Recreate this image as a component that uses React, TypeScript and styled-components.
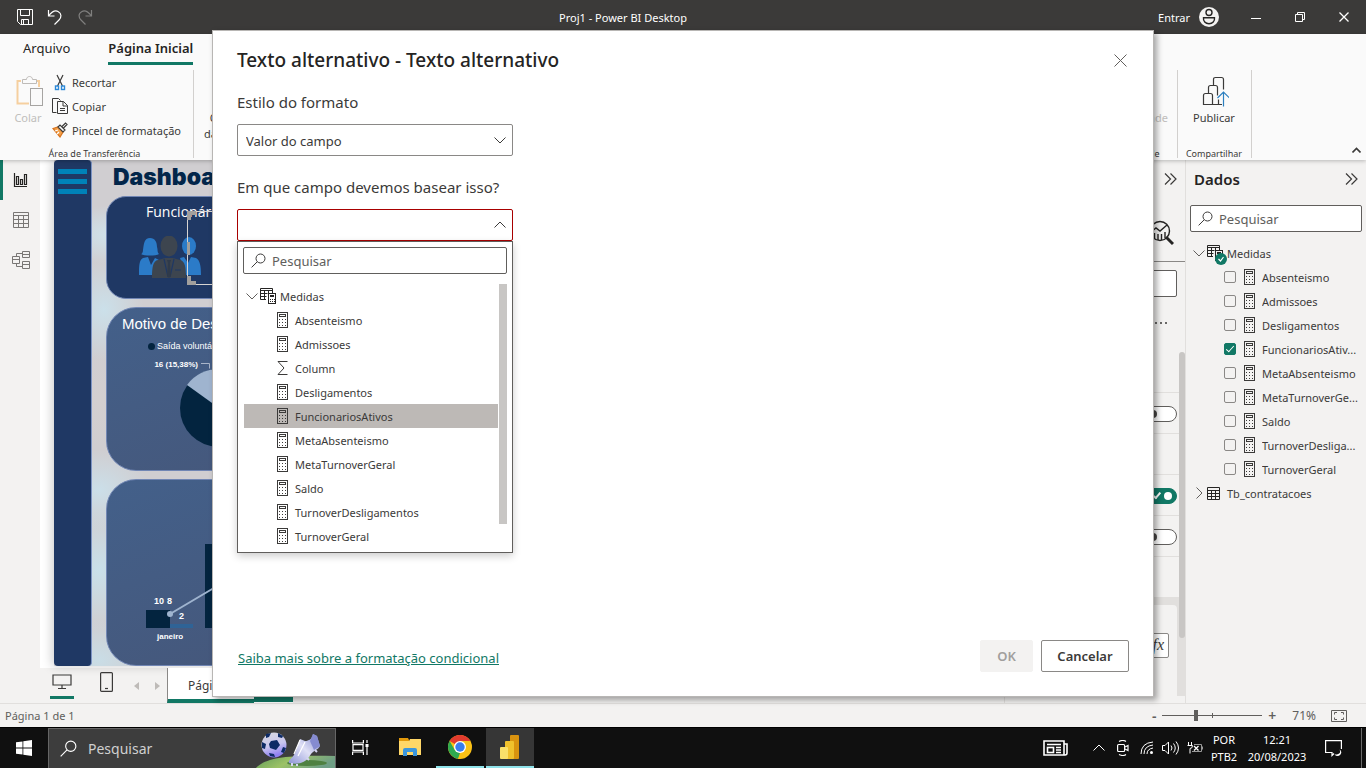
import React from "react";
import styled, { createGlobalStyle, css } from "styled-components";

const color = {
  ink: "#252423",
  text: "#3b3a39",
  muted: "#605e5c",
  disabled: "#a19f9d",
  line: "#e1dfdd",
  pane: "#f3f2f1",
  ribbon: "#fafafa",
  border: "#8a8886",
  green: "#117865",
  navy: "#1f3864",
  deep: "#03243f",
};

const Global = createGlobalStyle`
  *, *::before, *::after { box-sizing: border-box; }
  body { margin: 0; }
  body, button, input, select {
    font-family: "Noto Sans", "Open Sans", sans-serif;
    font-size: 11px;
    color: ${color.text};
  }
  button { padding: 0; border: 0; background: none; cursor: pointer; }
  ul { list-style: none; margin: 0; padding: 0; }
  svg { display: block; flex: none; }
`;

/* ---------- shared parts ---------- */

const Desktop = styled.div`
  position: relative;
  display: flex;
  flex-direction: column;
  min-height: 100vh;
  overflow: hidden;
  background: ${color.pane};
`;

const Stroke = styled.svg.attrs({ fill: "none", stroke: "currentColor" })``;

const IconButton = styled.button`
  display: flex;
  align-items: center;
  justify-content: center;
  color: inherit;
`;

const SearchField = styled.label`
  display: flex;
  align-items: center;
  gap: 6px;
  height: 27px;
  padding: 0 7px;
  border: 1px solid ${color.muted};
  border-radius: 2px;
  background: #fff;
  color: ${color.text};
`;

const SearchInput = styled.input`
  flex: 1;
  min-width: 0;
  padding: 0;
  border: 0;
  outline: 0;
  background: none;
  font-size: 13px;
  &::placeholder { color: ${color.muted}; opacity: 1; }
`;

const Magnifier = ({ size = 15 }: { size?: number }) => (
  <Stroke width={size} height={size} viewBox="0 0 15 15">
    <circle cx="9.5" cy="5.5" r="4.5" />
    <path d="M6.2 8.8 0.6 14.4" />
  </Stroke>
);

const CalcIcon = () => (
  <Stroke width="11" height="16" viewBox="0 0 11 16">
    <rect x="0.5" y="0.5" width="10" height="15" />
    <rect x="2.5" y="2.5" width="6" height="2" />
    <path d="M2 7.5h8M2 10.5h8M2 13.5h8" strokeDasharray="1 2" />
  </Stroke>
);

const SigmaIcon = () => (
  <Stroke width="11" height="16" viewBox="0 0 11 16">
    <path d="M10.5 1.5H1l6 6.5-6 6.5h9.500" />
  </Stroke>
);

const MeasureTableIcon = () => (
  <Stroke width="16" height="16" viewBox="0 0 16 16">
    <path d="M6 11.500H.5V.5h12V5M.5 2.500h12M.5 5.500h7M.5 8.500h6M4.500 2.500v9M8.500 2.500V5" />
    <rect x="8.500" y="5.500" width="7" height="10" />
    <rect x="10.500" y="7.500" width="3" height="1" />
    <path d="M10 11.500h5M10 13.500h5" strokeDasharray="1 1" />
  </Stroke>
);

const TableIcon = () => (
  <Stroke width="13" height="13" viewBox="0 0 13 13">
    <path d="M.5 .5h12v12H.5zM.5 3.500h12M.5 6.500h12M.5 9.500h12M4.500 3.500v9M8.500 3.500v9" />
  </Stroke>
);

const Chevron = ({ turn = 0, width = 12 }: { turn?: number; width?: number }) => (
  <Stroke width={width} height={width} viewBox="0 0 12 12">
    <path d="M.5 3.500 6 9l5.500-5.500" transform={`rotate(${turn} 6 6)`} />
  </Stroke>
);

const DoubleChevron = () => (
  <Stroke width="13" height="12" viewBox="0 0 13 12" strokeWidth="1.2">
    <path d="M1 .5 6.500 6 1 11.500M6.500 .5 12 6 6.500 11.500" />
  </Stroke>
);

/* ---------- title bar ---------- */

const TitleBar = styled.header`
  display: grid;
  grid-template-columns: 1fr auto 1fr;
  align-items: center;
  height: 34px;
  padding-left: 16px;
  background: #3b3a39;
  color: #fff;
`;

const TitleTools = styled.div`
  display: flex;
  align-items: center;
  gap: 12px;
`;

const AppTitle = styled.span`
  padding-right: 136px;
`;

const WindowTools = styled.div`
  display: flex;
  align-items: center;
  justify-content: flex-end;
  height: 34px;
`;

const SignIn = styled.button`
  display: flex;
  align-items: center;
  gap: 9px;
  margin-right: 15px;
  color: #fff;
`;

const WindowButton = styled(IconButton)`
  width: 44px;
  height: 34px;
`;

/* ---------- ribbon ---------- */

const Ribbon = styled.div`
  position: relative;
  display: flex;
  flex-direction: column;
  height: 126px;
  background: ${color.ribbon};
  box-shadow: 0 1px 4px rgba(0, 0, 0, 0.25);
`;

const RibbonTabs = styled.nav`
  display: flex;
  gap: 38px;
  height: 36px;
  padding-left: 23px;
`;

const RibbonTab = styled.button<{ $active?: boolean }>`
  height: 31px;
  border-bottom: 3px solid ${(p) => (p.$active ? color.green : "transparent")};
  font-size: 13px;
  color: ${color.ink};
  font-weight: ${(p) => (p.$active ? 600 : 400)};
`;

const RibbonGroups = styled.div`
  display: flex;
  height: 88px;
`;

const RibbonGroup = styled.section<{ $push?: boolean; $roomy?: boolean }>`
  display: flex;
  flex-direction: column;
  justify-content: space-between;
  padding: 0 ${(p) => (p.$roomy ? 12 : 9)}px 0 8px;
  border-right: 1px solid #d2d0ce;
  ${(p) => p.$push && css`margin-left: auto;`}
`;

const GroupBody = styled.div`
  display: flex;
  gap: 4px;
`;

const GroupName = styled.div`
  height: 11px;
  font-size: 9px;
  line-height: 14px;
  text-align: center;
`;

const BigCommand = styled.button<{ $off?: boolean }>`
  display: flex;
  flex-direction: column;
  align-items: center;
  gap: 3px;
  min-width: 40px;
  padding-top: 5px;
  line-height: 16px;
  color: ${(p) => (p.$off ? "#c0bebc" : color.text)};
`;

const MenuLine = styled.span`
  display: flex;
  align-items: center;
  gap: 4px;
  padding-left: 2px;
`;

const CommandList = styled.div`
  display: flex;
  flex-direction: column;
`;

const SmallCommand = styled.button`
  display: flex;
  align-items: center;
  gap: 4px;
  height: 24px;
`;

const CollapseRibbon = styled(IconButton)`
  align-self: flex-end;
  width: 20px;
  height: 16px;
  margin-left: 94px;
`;

/* ---------- workspace ---------- */

const Workspace = styled.main`
  display: flex;
  flex: 1;
`;

const Rail = styled.nav`
  display: flex;
  flex-direction: column;
  width: 40px;
`;

const RailButton = styled(IconButton)<{ $active?: boolean }>`
  height: 40px;
  padding-right: 2px;
  border-left: 3px solid ${(p) => (p.$active ? color.green : "transparent")};
  color: ${(p) => (p.$active ? color.ink : "#797775")};
`;

const CanvasColumn = styled.div`
  display: flex;
  flex-direction: column;
  flex: 1;
  min-width: 0;
`;

const Canvas = styled.div`
  display: flex;
  flex: 1;
  padding: 0 14px 2px;
  background: #fff;
`;

const Report = styled.div`
  display: flex;
  flex: 1;
  min-width: 0;
  background:
    radial-gradient(ellipse 60px 30px at 60px 75px, #cfe3ec, transparent),
    radial-gradient(ellipse 40px 50px at 50px 150px, #cbe0ea, transparent),
    radial-gradient(ellipse 40px 50px at 45px 240px, #d3cfd0, transparent),
    radial-gradient(ellipse 50px 40px at 45px 330px, #cbdfe9, transparent),
    radial-gradient(ellipse 50px 60px at 45px 410px, #c9e0ea, transparent),
    radial-gradient(ellipse 50px 40px at 45px 500px, #c9dde6, transparent),
    #d0ced1;
  box-shadow: -2px 0 10px rgba(0, 0, 0, 0.2);
`;

const ReportStrip = styled.div`
  display: flex;
  flex-direction: column;
  gap: 5px;
  width: 38px;
  padding: 9px 4px;
  border-radius: 4px;
  border-right: 1px solid #7c93c4;
  background: ${color.navy};
`;

const StripBar = styled.span`
  height: 5px;
  flex: none;
  background: #0082b8;
`;

const ReportBody = styled.div`
  display: grid;
  grid-template-rows: 28px 103px 164px 1fr;
  gap: 8px;
  flex: 1;
  min-width: 0;
  padding: 0 14px;
`;

const ReportTitle = styled.h1`
  margin: 0;
  padding: 2px 7px;
  font-family: Inter, "Liberation Sans", sans-serif;
  font-size: 23px;
  line-height: 30px;
  font-weight: 900;
  color: #02264a;
`;

const Card = styled.section<{ $solid?: boolean }>`
  position: relative;
  display: flex;
  flex-direction: column;
  border: 1px solid #7186b4;
  border-radius: ${(p) => (p.$solid ? 20 : 30)}px;
  background: ${(p) =>
    p.$solid ? color.navy : "linear-gradient(160deg, #43608a, #45587c 45%, #475c86 70%, #44597f)"};
  color: #fff;
`;

const CardTitle = styled.h2<{ $sans?: boolean }>`
  margin: 0;
  padding: ${(p) => (p.$sans ? "6px 15px 0" : "5px 39px 0")};
  font-family: ${(p) => (p.$sans ? '"Liberation Sans", sans-serif' : '"Open Sans", sans-serif')};
  font-size: ${(p) => (p.$sans ? 15 : 14)}px;
  line-height: 20px;
  font-weight: 400;
`;

const Legend = styled.div`
  display: flex;
  align-items: center;
  gap: 2px;
  padding: 5px 41px 0;
  font: 400 9px/14px "Liberation Sans", sans-serif;
`;

const LegendDot = styled.span`
  width: 7px;
  height: 7px;
  border-radius: 50%;
  background: ${color.deep};
`;

const ChartSvg = styled.svg`
  font-family: "Liberation Sans", sans-serif;
  font-weight: 700;
  fill: #fff;
`;

const PeopleBox = styled.div`
  padding: 14px 32px 0;
`;

const Selection = styled.div`
  position: absolute;
  left: 80px;
  top: 14px;
  width: 200px;
  height: 74px;
  border: 1px solid #d6d4d2;
  border-right: 0;
`;

const Handle = styled.span<{ $at: "top" | "middle" | "bottom" }>`
  position: absolute;
  left: -1px;
  ${(p) =>
    p.$at === "middle"
      ? css`top: 30px; width: 3px; height: 13px; background: #a19f9d;`
      : css`
          ${p.$at}: -1px;
          width: 9px;
          height: 9px;
          border: 0 solid #a19f9d;
          border-left-width: 4px;
          border-${p.$at}-width: 4px;
        `}
`;

const PageBar = styled.div`
  display: flex;
  align-items: stretch;
  height: 35px;
`;

const ViewButton = styled(IconButton)<{ $active?: boolean }>`
  width: 24px;
  height: 31px;
  margin: 0 10px;
  border-bottom: 3px solid ${(p) => (p.$active ? color.green : "transparent")};
`;

const PageArrows = styled.div`
  display: flex;
  align-items: center;
  gap: 16px;
  padding: 0 7px 0 6px;
  color: #bebbb8;
`;

const PageTab = styled.button`
  width: 87px;
  padding: 4px 0 0 20px;
  border-left: 1px solid #8a8886;
  border-bottom: 4px solid ${color.green};
  background: #fff;
  font-size: 12px;
  text-align: left;
`;

const NewPage = styled.button`
  align-self: flex-end;
  width: 39px;
  height: 8px;
  border-bottom: 1px solid #fff;
  background: ${color.green};
`;

/* ---------- visualizations pane ---------- */

const VisualPane = styled.aside`
  display: flex;
  flex-direction: column;
  width: 182px;
  border-left: 1px solid ${color.line};
  border-right: 1px solid ${color.line};
`;

const PaneHeader = styled.div`
  display: flex;
  align-items: center;
  justify-content: flex-end;
  height: 40px;
  padding: 0 8px 2px;
`;

const PaneModes = styled.div`
  display: flex;
  align-items: center;
  justify-content: flex-end;
  height: 62px;
  padding: 4px 11px 0;
  border-bottom: 1px solid ${color.border};
  color: ${color.ink};
`;

const FormatSearch = styled.div`
  padding: 8px 8px 0;
`;

const MoreRow = styled.div`
  display: flex;
  justify-content: flex-end;
  height: 55px;
  padding: 15px 16px;
`;

const FormatList = styled.div`
  position: relative;
  display: flex;
  flex-direction: column;
`;

const FormatRow = styled.div`
  display: flex;
  align-items: center;
  justify-content: flex-end;
  height: 41px;
  padding: 1px 8px 0 0;
  border-bottom: 1px solid ${color.line};
`;

const Toggle = styled.input.attrs({ type: "checkbox" })`
  position: relative;
  appearance: none;
  width: 32px;
  height: 16px;
  margin: 0;
  border: 1px solid ${color.muted};
  border-radius: 8px;
  background: #fff;
  &::before {
    content: "";
    position: absolute;
    top: 3px;
    left: 3px;
    width: 8px;
    height: 8px;
    border-radius: 50%;
    background: #484644;
  }
  &:checked { background: ${color.green}; border-color: ${color.green}; }
  &:checked::before { left: 18px; background: #fff; }
  &:checked::after {
    content: "";
    position: absolute;
    top: 2px;
    left: 9px;
    width: 4px;
    height: 8px;
    border: solid #fff;
    border-width: 0 2px 2px 0;
    transform: rotate(40deg);
  }
`;

const FormatGroup = styled.div`
  height: 98px;
  padding: 7px 8px 0 0;
  background: ${color.line};
`;

const FormatCard = styled.div`
  display: flex;
  justify-content: flex-end;
  height: 91px;
  padding: 28px 8px;
  border-radius: 4px 4px 0 0;
  background: ${color.pane};
`;

const FxButton = styled.button`
  width: 28px;
  height: 25px;
  border: 1px solid ${color.border};
  border-radius: 2px;
  background: #fff;
  font: italic 16px "Liberation Serif", serif;
  text-align: right;
  padding: 0 4px 2px 0;
`;

const ScrollThumb = styled.span<{ $width: number; $height: number; $radius?: number }>`
  position: absolute;
  right: 0;
  top: 0;
  width: ${(p) => p.$width}px;
  height: ${(p) => p.$height}px;
  border-radius: ${(p) => p.$radius ?? 0}px;
  background: #c8c6c4;
`;

/* ---------- data pane and field trees ---------- */

const DataPane = styled.aside`
  display: flex;
  flex-direction: column;
  width: 180px;
  padding: 0 4px;
`;

const DataHeader = styled.div`
  display: flex;
  align-items: center;
  justify-content: space-between;
  height: 45px;
  padding: 0 4px 8px;
`;

const DataTitle = styled.h2`
  margin: 0;
  font-size: 15px;
  font-weight: 600;
  color: ${color.ink};
`;

const DataTree = styled.ul`
  padding-top: 9px;
`;

const TableRow = styled.li`
  display: flex;
  align-items: center;
  gap: 2px;
  height: 24px;
  padding-left: 3px;
  color: ${color.muted};
`;

const IconSlot = styled.span`
  position: relative;
  display: flex;
  width: 16px;
  color: ${color.ink};
`;

const UsedBadge = styled.span`
  position: absolute;
  left: 8px;
  top: 8px;
  display: flex;
  align-items: center;
  justify-content: center;
  width: 12px;
  height: 12px;
  border-radius: 50%;
  background: ${color.green};
  color: #fff;
`;

const FieldRow = styled.li`
  height: 24px;
`;

const FieldLabel = styled.label`
  display: flex;
  align-items: center;
  gap: 7px;
  height: 24px;
  padding-left: 34px;
`;

const FieldName = styled.span<{ $table?: boolean }>`
  flex: 1;
  min-width: 0;
  padding-left: ${(p) => (p.$table ? 2 : 0)}px;
  overflow: hidden;
  white-space: nowrap;
  color: ${color.text};
`;

const CheckBox = styled.input.attrs({ type: "checkbox" })`
  position: relative;
  appearance: none;
  width: 12px;
  height: 12px;
  margin: 0 1px 0 0;
  border: 1px solid ${color.border};
  border-radius: 2px;
  &:checked { background: ${color.green}; border-color: ${color.green}; }
  &:checked::after {
    content: "";
    position: absolute;
    left: 3px;
    top: 0;
    width: 4px;
    height: 8px;
    border: solid #fff;
    border-width: 0 1px 1px 0;
    transform: rotate(42deg);
  }
`;

/* ---------- status bar ---------- */

const StatusBar = styled.footer`
  display: flex;
  align-items: center;
  justify-content: space-between;
  height: 24px;
  padding: 0 19px 0 5px;
  border-top: 1px solid ${color.line};
  color: ${color.muted};
`;

const Zoom = styled.div`
  display: flex;
  align-items: center;
  gap: 4px;
`;

const ZoomButton = styled.button`
  width: 8px;
  font-size: 14px;
  line-height: 20px;
  font-weight: 600;
  color: ${color.muted};
`;

const ZoomSlider = styled.input.attrs({ type: "range" })`
  appearance: none;
  width: 100px;
  height: 12px;
  margin: 0 2px 0 0;
  background:
    linear-gradient(${color.muted}, ${color.muted}) center / 100% 1px no-repeat,
    linear-gradient(${color.muted}, ${color.muted}) center / 1px 5px no-repeat;
  &::-webkit-slider-thumb {
    appearance: none;
    width: 4px;
    height: 11px;
    background: ${color.muted};
  }
`;

const ZoomValue = styled.span`
  padding: 0 11px 0 12px;
  font-size: 12px;
`;

/* ---------- taskbar ---------- */

const Taskbar = styled.div`
  display: flex;
  align-items: stretch;
  height: 41px;
  border-top: 1px solid #000;
  background: #101010;
  color: #fff;
`;

const StartButton = styled(IconButton)`
  width: 48px;
`;

const TaskSearch = styled.label`
  display: flex;
  align-items: center;
  gap: 11px;
  width: 288px;
  padding-left: 11px;
  border: 1px solid #666;
  border-bottom: 0;
  background: #3d3d3d;
  color: #fff;
`;

const TaskSearchInput = styled(SearchInput)`
  font-size: 14px;
  color: #fff;
  &::placeholder { color: #d0d0d0; }
`;

const TaskApps = styled.div`
  display: flex;
  gap: 2px;
`;

const TaskApp = styled(IconButton)<{ $running?: boolean; $current?: boolean }>`
  width: 48px;
  border-bottom: 2px solid ${(p) => (p.$running ? "#8fe3ea" : "transparent")};
  background: ${(p) => (p.$current ? "#363636" : "none")};
`;

const Tray = styled.div`
  display: flex;
  align-items: center;
  margin-left: auto;
  padding-right: 4px;
`;

const TrayButton = styled(IconButton)<{ $width?: number }>`
  width: ${(p) => p.$width ?? 24}px;
  height: 40px;
`;

const TrayText = styled.div<{ $width: number }>`
  width: ${(p) => p.$width}px;
  line-height: 17px;
  text-align: center;
`;

const ShowDesktop = styled.button`
  width: 1px;
  height: 40px;
  margin-left: 10px;
  background: #6a6a6a;
`;

/* ---------- dialog ---------- */

const Overlay = styled.div`
  position: absolute;
  inset: 0 0 41px;
  display: flex;
  align-items: center;
  justify-content: center;
`;

const Dialog = styled.div`
  display: flex;
  flex-direction: column;
  width: 942px;
  max-width: 100%;
  min-height: 667px;
  padding: 17px 24px 24px;
  border: 1px solid #b8b6b4;
  background: #fff;
  box-shadow: 3px 3px 6px rgba(0, 0, 0, 0.35);
`;

const DialogHead = styled.div`
  display: flex;
  align-items: center;
  justify-content: space-between;
  height: 24px;
  padding-right: 2px;
  color: ${color.muted};
`;

const DialogTitle = styled.h2`
  margin: 0;
  font-size: 19px;
  line-height: 24px;
  font-weight: 500;
  color: ${color.ink};
`;

const Form = styled.form`
  display: flex;
  flex-direction: column;
  flex: 1;
  width: 276px;
  padding-top: 18px;
`;

const Label = styled.label`
  height: 34px;
  line-height: 24px;
  font-size: 15px;
  white-space: nowrap;
`;

const Dropdown = styled.div`
  position: relative;
  margin-bottom: 19px;
`;

const DropdownArrow = styled.span`
  position: absolute;
  right: 7px;
  top: 10px;
  pointer-events: none;
`;

const boxStyle = css`
  display: block;
  width: 100%;
  height: 32px;
  padding: 1px 8px 0;
  border: 1px solid ${color.border};
  border-radius: 2px;
  background: #fff;
  font-size: 13px;
`;

const Select = styled.select`
  ${boxStyle}
  appearance: none;
`;

const FieldPicker = styled.button`
  ${boxStyle}
  border-color: #a80000;
`;

const Popup = styled.div`
  position: absolute;
  top: 32px;
  left: 0;
  right: 0;
  padding: 5px 5px 4px;
  border: 1px solid ${color.muted};
  background: #fff;
  box-shadow: 0 3px 8px rgba(0, 0, 0, 0.2);
`;

const PopupTree = styled.ul`
  position: relative;
  margin-top: 10px;
`;

const PopupField = styled.li<{ $selected?: boolean }>`
  display: flex;
  align-items: center;
  gap: 7px;
  height: 24px;
  margin: 0 9px 0 1px;
  padding-left: 33px;
  background: ${(p) => (p.$selected ? "#bdb9b6" : "none")};
`;

const DialogFoot = styled.div`
  display: flex;
  align-items: center;
  gap: 8px;
`;

const LearnMore = styled.a`
  margin-right: auto;
  padding-left: 1px;
  padding-top: 4px;
  font-size: 13px;
  color: ${color.green};
`;

const DialogButton = styled.button<{ $width: number }>`
  width: ${(p) => p.$width}px;
  height: 32px;
  border: 1px solid ${color.border};
  border-radius: 2px;
  font-size: 13px;
  font-weight: 600;
  color: ${color.text};
  &:disabled { border-color: ${color.pane}; background: ${color.pane}; color: ${color.disabled}; }
`;

/* ---------- drawings ---------- */

const People = () => (
  <svg width="62" height="43" viewBox="0 0 62 43">
    <g fill="#2b7bc8">
      <path d="M11 2C5 2 5 8 4 14c0 2-1 4-2 4 3 2 15 2 18 0-2-2-1-4-2-7C18 6 16 2 11 2Z" />
      <path d="M0 39c0-9 0-15 4-17l5-1 3 8 4-7 4 2-7 15Z" />
      <ellipse cx="50" cy="10" rx="7" ry="9" />
      <path d="M62 39c0-9-1-15-5-17l-5-1-3 6-4-6-4 1 6 17Z" />
    </g>
    <g fill="#3d454f">
      <ellipse cx="30" cy="10" rx="8.500" ry="10.500" />
      <path d="M13 42c0-11 1-17 6-18l7-2h8l7 2c5 1 6 7 6 18Z" />
    </g>
    <path d="M25 23l4 18M35 23l-4 18" fill="none" stroke="#1f3864" strokeWidth="1.200" />
    <path d="M28 24h4l-1 3 1 13-2 2-2-2 1-13Z" fill="#2f3a4a" />
    <path d="M36 34h6" stroke="#1f3864" strokeWidth="1" />
  </svg>
);

const Boot = () => (
  <svg width="84" height="40" viewBox="0 0 84 40">
    <defs>
      <linearGradient id="turf" x1="0" y1="0" x2="1" y2="0.300">
        <stop offset="0" stopColor="#5e9a5a" />
        <stop offset="0.500" stopColor="#9cc266" />
        <stop offset="1" stopColor="#6f9f86" />
      </linearGradient>
      <linearGradient id="boot" x1="0" y1="1" x2="1" y2="0">
        <stop offset="0" stopColor="#8d94d6" />
        <stop offset="0.500" stopColor="#dfe0f6" />
        <stop offset="1" stopColor="#7f86cc" />
      </linearGradient>
      <linearGradient id="ball" x1="0" y1="0" x2="0.300" y2="1">
        <stop offset="0" stopColor="#d8dade" />
        <stop offset="0.600" stopColor="#c9c6ef" />
        <stop offset="1" stopColor="#8f7ff0" />
      </linearGradient>
    </defs>
    <path d="M4 40c10-12 34-14 80-13v13Z" fill="url(#turf)" />
    <ellipse cx="56" cy="34" rx="20" ry="3" fill="#4f8142" />
    <circle cx="23" cy="16" r="12.500" fill="url(#ball)" />
    <g fill="#0d2b66">
      <path d="m20 12 6-1 3 5-4 5-6-2-1-4Z" />
      <path d="M11 13l4 2-1 5-3-1Z" />
      <path d="M27 4l5 3-1 2-4-1Z" />
      <path d="M32 18l3 1-2 5-3-1Z" />
      <path d="M15 5l5-1-2 4-3 1Z" />
      <path d="M18 24l5 1 1 3-5-1Z" />
    </g>
    <path
      d="M38 34c-1-3 4-5 6-10l5-14 5 2c4 0 7-2 8-7l4 2 3 10c-2 4-6 4-9 8-3 5-8 12-22 9Z"
      fill="url(#boot)"
    />
    <path d="M62 5l4 2 3 10-6 4-4-9Z" fill="#858bd0" />
    <path d="M49 11l-6 14M54 13l-7 14" stroke="#fff" strokeWidth="1.200" fill="none" />
    <path d="M41 34v3M46 35v2M56 29l2 2M64 21l2 2" stroke="#d5d6f2" strokeWidth="2" />
  </svg>
);

const measures = [
  ["Absenteismo", "Absenteismo"],
  ["Admissoes", "Admissoes"],
  ["Desligamentos", "Desligamentos"],
  ["FuncionariosAtivos", "FuncionariosAtiv..."],
  ["MetaAbsenteismo", "MetaAbsenteismo"],
  ["MetaTurnoverGeral", "MetaTurnoverGe..."],
  ["Saldo", "Saldo"],
  ["TurnoverDesligamentos", "TurnoverDesliga..."],
  ["TurnoverGeral", "TurnoverGeral"],
];

const popupFields = [
  "Absenteismo",
  "Admissoes",
  "Column",
  "Desligamentos",
  "FuncionariosAtivos",
  "MetaAbsenteismo",
  "MetaTurnoverGeral",
  "Saldo",
  "TurnoverDesligamentos",
  "TurnoverGeral",
];

/* ---------- sections ---------- */

const TitleSection = () => (
  <TitleBar>
    <TitleTools>
      <IconButton aria-label="Salvar">
        <Stroke width="18" height="18" viewBox="0 0 18 18">
          <path d="M1.500 1.500h15v15h-12l-3-3zM4.500 1.500v6h9v-6M5.500 16.500v-5h7v5M7.500 12v4" />
        </Stroke>
      </IconButton>
      <IconButton aria-label="Desfazer">
        <Stroke width="18" height="18" viewBox="0 0 18 18" strokeWidth="1.200">
          <path d="M2.500 2v6h6M2.500 8C6 3.500 9 2 12 3.500c4 2 3.500 6 1 8.500L8.500 16.500" />
        </Stroke>
      </IconButton>
      <IconButton aria-label="Refazer">
        <Stroke width="18" height="18" viewBox="0 0 18 18" strokeWidth="1.200" opacity="0.350">
          <path d="M15.500 2v6h-6M15.500 8C12 3.500 9 2 6 3.500c-4 2-3.500 6-1 8.500l4.500 4.500" />
        </Stroke>
      </IconButton>
    </TitleTools>
    <AppTitle>Proj1 - Power BI Desktop</AppTitle>
    <WindowTools>
      <SignIn>
        Entrar
        <svg width="20" height="20" viewBox="0 0 20 20">
          <circle cx="10" cy="10" r="10" fill="#f3f2f1" />
          <g fill="none" stroke="#252423" strokeWidth="1.400">
            <circle cx="10" cy="5.500" r="3" />
            <path d="M4.500 10.700h11c.5 3.500-2 6-5.500 6s-6-2.500-5.500-6Z" />
          </g>
        </svg>
      </SignIn>
      <WindowButton aria-label="Minimizar">
        <Stroke width="10" height="10" viewBox="0 0 10 10"><path d="M0 6.500h10" /></Stroke>
      </WindowButton>
      <WindowButton aria-label="Restaurar">
        <Stroke width="10" height="10" viewBox="0 0 10 10">
          <path d="M.5 2.500h7v7h-7zM2.500 2.500v-2h7v7h-2" />
        </Stroke>
      </WindowButton>
      <WindowButton aria-label="Fechar">
        <Stroke width="10" height="10" viewBox="0 0 10 10" strokeWidth="1.300">
          <path d="M.5 .5l9 9M9.500 .5l-9 9" />
        </Stroke>
      </WindowButton>
    </WindowTools>
  </TitleBar>
);

const RibbonSection = () => (
  <Ribbon>
    <RibbonTabs>
      <RibbonTab>Arquivo</RibbonTab>
      <RibbonTab $active>Página Inicial</RibbonTab>
    </RibbonTabs>
    <RibbonGroups>
      <RibbonGroup $roomy>
        <GroupBody>
          <BigCommand $off>
            <svg width="30" height="32" viewBox="0 0 30 32" fill="none">
              <path d="M8 6H4.500V28.500H16M23 6h3v6" stroke="#f5cf9f" strokeWidth="2" />
              <path d="M9.500 8.500v-4h4c0-4 6-4 6 0h4v4Z" stroke="#bebbb8" fill="#fafafa" />
              <rect x="17.500" y="13.500" width="12" height="17" stroke="#a6a4a2" fill="#fafafa" />
            </svg>
            Colar
          </BigCommand>
          <CommandList>
            <SmallCommand>
              <svg width="16" height="17" viewBox="0 0 16 17" fill="none">
                <path d="M5 1l5.500 11M11 1 5.500 12" stroke="#3b3a39" strokeWidth="1.200" />
                <rect x="3.500" y="12" width="3" height="3.500" stroke="#2b88d8" strokeWidth="1.400" />
                <rect x="9.500" y="12" width="3" height="3.500" stroke="#2b88d8" strokeWidth="1.400" />
              </svg>
              Recortar
            </SmallCommand>
            <SmallCommand>
              <Stroke width="16" height="16" viewBox="0 0 16 16">
                <path d="M4.500 14.500h-4v-14h6l2 2" />
                <path d="M5.500 3.500h6l4 4v8h-10zM11 3.500V8h4.500M8 10.500h5M8 12.500h5" />
              </Stroke>
              Copiar
            </SmallCommand>
            <SmallCommand>
              <svg width="16" height="16" viewBox="0 0 16 16" fill="none" strokeWidth="1.200">
                <path d="M1 6.500 6 5l5 5-3 5Z" fill="#f3a04a" stroke="#d8731c" />
                <path d="M3 9l3-1M5 12l2-2" stroke="#fff" />
                <path d="m6 5 2-2 5 5-2 2ZM10 4.500l3.500-3.500 1.500 1.500L11.500 6" stroke="#3b3a39" fill="#fff" />
              </svg>
              Pincel de formatação
            </SmallCommand>
          </CommandList>
        </GroupBody>
        <GroupName>Área de Transferência</GroupName>
      </RibbonGroup>
      <RibbonGroup>
        <BigCommand>
          <svg width="16" height="32" viewBox="0 0 16 32" fill="none" stroke="#605e5c">
            <ellipse cx="8" cy="6" rx="7" ry="3" />
            <path d="M1 6v18c0 4 14 4 14 0V6" />
          </svg>
          <span>
            Obter
            <MenuLine>dados <Chevron width={8} /></MenuLine>
          </span>
        </BigCommand>
      </RibbonGroup>
      <RibbonGroup $push>
        <BigCommand $off>
          <svg width="30" height="32" viewBox="0 0 30 32" fill="none" stroke="#c8c6c4">
            <rect x="5" y="6" width="20" height="20" />
          </svg>
          Confidencialidade
        </BigCommand>
        <GroupName>Confidencialidade</GroupName>
      </RibbonGroup>
      <RibbonGroup>
        <BigCommand>
          <svg width="30" height="32" viewBox="0 0 30 32" fill="none" strokeWidth="1.200">
            <path
              d="M15 29.500H4.500v-9q0-2 2-2h5q2 0 2 2v9M9.500 18.500v-6q0-2 2-2h5q2 0 2 2v8M14.500 10.500v-6q0-2 2-2h6q2 0 2 2v10M14.500 29.500h5v-5M20 29.500h3"
              stroke="#3b3a39"
            />
            <path d="M24.500 31.500V17M18.500 23l6-6 6 6" stroke="#2b7fbf" />
          </svg>
          Publicar
        </BigCommand>
        <GroupName>Compartilhar</GroupName>
      </RibbonGroup>
      <CollapseRibbon aria-label="Recolher">
        <Stroke width="9" height="6" viewBox="0 0 9 6" strokeWidth="1.600">
          <path d="M.5 5.500l4-4 4 4" />
        </Stroke>
      </CollapseRibbon>
    </RibbonGroups>
  </Ribbon>
);

const RailSection = () => (
  <Rail>
    <RailButton $active aria-label="Relatório">
      <Stroke width="15" height="15" viewBox="0 0 15 15" strokeWidth="1.200">
        <path d="M1.500 0v13.500H14M3.500 11.500v-8h2v8zM7.500 11.500v-5h2v5zM11.500 11.500V1.500h2v10z" />
      </Stroke>
    </RailButton>
    <RailButton aria-label="Dados">
      <Stroke width="16" height="16" viewBox="0 0 16 16">
        <path d="M.5 .5h15v15H.5zM.5 3.500h15M.5 7.500h15M.5 11.500h15M5.500 3.500v12M10.500 3.500v12" />
      </Stroke>
    </RailButton>
    <RailButton aria-label="Modelo">
      <Stroke width="18" height="18" viewBox="0 0 18 18">
        <path d="M.5 5.500h7v7h-7zM.5 8.500h7M10.500 .5h7v6h-7zM10.500 3.500h7M10.500 10.500h7v7h-7zM10.500 13.500h7M4.500 5.500v-3h6M4.500 12.500v3h6" />
      </Stroke>
    </RailButton>
  </Rail>
);

const ReportSection = () => (
  <CanvasColumn>
    <Canvas>
      <Report>
        <ReportStrip>
          <StripBar />
          <StripBar />
          <StripBar />
        </ReportStrip>
        <ReportBody>
          <ReportTitle>Dashboard</ReportTitle>
          <Card $solid>
            <CardTitle>Funcionários</CardTitle>
            <PeopleBox>
              <People />
            </PeopleBox>
            <Selection>
              <Handle $at="top" />
              <Handle $at="middle" />
              <Handle $at="bottom" />
            </Selection>
          </Card>
          <Card>
            <CardTitle $sans>Motivo de Desligamento</CardTitle>
            <Legend>
              <LegendDot />
              Saída voluntária
            </Legend>
            <ChartSvg width="160" height="100" viewBox="0 0 160 100">
              <text x="91" y="14" textAnchor="end" fontSize="8">16 (15,38%)</text>
              <path d="M94 10.500h8.500v5" fill="none" stroke="#a9b5c9" />
              <circle cx="112" cy="55" r="39" fill={color.deep} />
              <path d="M112 55 80 32A39 39 0 0 1 112 16Z" fill="#9fb4cf" />
            </ChartSvg>
          </Card>
          <Card>
            <ChartSvg width="160" height="184" viewBox="0 1 160 184">
              <rect x="39" y="131" width="24" height="18" fill={color.deep} />
              <rect x="63" y="145" width="23" height="4" fill="#2f6396" />
              <rect x="98" y="65" width="24" height="84" fill={color.deep} />
              <path d="M63 135 122 100" stroke="#9fb4cf" strokeWidth="2" />
              <circle cx="63" cy="135" r="3" fill="#9fb4cf" />
              <g fontSize="9">
                <text x="47" y="125">10</text>
                <text x="60" y="125">8</text>
                <text x="72" y="140">2</text>
                <text x="50" y="160" fontSize="8">janeiro</text>
              </g>
            </ChartSvg>
          </Card>
        </ReportBody>
      </Report>
    </Canvas>
    <PageBar>
      <ViewButton $active aria-label="Layout da área de trabalho">
        <Stroke width="20" height="16" viewBox="0 0 20 16" strokeWidth="1.200">
          <path d="M1 1h18v10H1zM10 11v3M6 14.500h8" />
        </Stroke>
      </ViewButton>
      <ViewButton aria-label="Layout móvel">
        <Stroke width="13" height="20" viewBox="0 0 13 20" strokeWidth="1.200">
          <rect x=".6" y=".6" width="11.800" height="18.800" rx="1" />
          <path d="M5 16.500h3" />
        </Stroke>
      </ViewButton>
      <PageArrows>
        <svg width="5" height="8"><path d="M5 0v8L0 4z" fill="currentColor" /></svg>
        <svg width="5" height="8"><path d="M0 0v8l5-4z" fill="currentColor" /></svg>
      </PageArrows>
      <PageTab>Página 1</PageTab>
      <NewPage aria-label="Nova página" />
    </PageBar>
  </CanvasColumn>
);

const VisualSection = () => (
  <VisualPane>
    <PaneHeader>
      <IconButton aria-label="Recolher visualizações"><DoubleChevron /></IconButton>
    </PaneHeader>
    <PaneModes>
      <Stroke width="26" height="26" viewBox="0 0 26 26" strokeWidth="1.400">
        <circle cx="12" cy="11" r="9.500" />
        <path d="M3 12l5-4 4 3 7-6M6.500 18v-5M10 20v-6M13.500 20v-6M17 18v-6" />
        <path d="M18 17l7 7" strokeWidth="3" />
      </Stroke>
    </PaneModes>
    <FormatSearch>
      <SearchField>
        <SearchInput aria-label="Pesquisar formatos" />
      </SearchField>
    </FormatSearch>
    <MoreRow>
      <svg width="26" height="20" fill={color.text}>
        <circle cx="13" cy="11" r="1" /><circle cx="18" cy="11" r="1" /><circle cx="23" cy="11" r="1" />
      </svg>
    </MoreRow>
    <FormatList>
      <FormatRow />
      <FormatRow><Toggle aria-label="Título" /></FormatRow>
      <FormatRow />
      <FormatRow><Toggle aria-label="Efeitos" defaultChecked /></FormatRow>
      <FormatRow><Toggle aria-label="Ícones" /></FormatRow>
      <FormatRow />
      <FormatGroup>
        <FormatCard>
          <FxButton>fx</FxButton>
        </FormatCard>
      </FormatGroup>
      <ScrollThumb $width={6} $height={286} $radius={3} />
    </FormatList>
  </VisualPane>
);

const DataSection = () => (
  <DataPane>
    <DataHeader>
      <DataTitle>Dados</DataTitle>
      <IconButton aria-label="Recolher dados"><DoubleChevron /></IconButton>
    </DataHeader>
    <SearchField>
      <Magnifier />
      <SearchInput aria-label="Pesquisar dados" placeholder="Pesquisar" />
    </SearchField>
    <DataTree>
      <TableRow>
        <Chevron />
        <IconSlot>
          <MeasureTableIcon />
          <UsedBadge>
            <Stroke width="6" height="6" viewBox="0 0 6 6" strokeWidth="1.200"><path d="M.5 3l2 2 3-4" /></Stroke>
          </UsedBadge>
        </IconSlot>
        <FieldName $table>Medidas</FieldName>
      </TableRow>
      {measures.map(([name, shown]) => (
        <FieldRow key={name}>
          <FieldLabel>
            <CheckBox defaultChecked={name === "FuncionariosAtivos"} />
            <CalcIcon />
            <FieldName>{shown}</FieldName>
          </FieldLabel>
        </FieldRow>
      ))}
      <TableRow>
        <Chevron turn={-90} />
        <IconSlot><TableIcon /></IconSlot>
        <FieldName $table>Tb_contratacoes</FieldName>
      </TableRow>
    </DataTree>
  </DataPane>
);

const TaskbarSection = () => (
  <Taskbar>
    <StartButton aria-label="Iniciar">
      <svg width="16" height="16" viewBox="0 0 16 16" fill="#fff">
        <path d="M0 2.300 6.500 1.400V7.600H0zM7.300 1.300 16 0v7.600H7.300zM0 8.400h6.500v6.200L0 13.700zM7.300 8.400H16V16l-8.700-1.300z" />
      </svg>
    </StartButton>
    <TaskSearch>
      <Magnifier size={17} />
      <TaskSearchInput aria-label="Pesquisar no Windows" placeholder="Pesquisar" />
      <Boot />
    </TaskSearch>
    <TaskApps>
      <TaskApp aria-label="Visão de tarefas">
        <Stroke width="17" height="17" viewBox="0 0 17 17" strokeWidth="1.200">
          <path d="M.6 1v3h10.800V1M.6 16v-3h10.800v3M1 5.600h10v5.800H1zM15 1v3M15 8v8" />
          <rect x="13.500" y="5" width="3" height="3" fill="#fff" stroke="none" />
        </Stroke>
      </TaskApp>
      <TaskApp aria-label="Explorador de Arquivos">
        <svg width="22" height="18" viewBox="0 0 22 18">
          <path d="M0 0h9l1 2v4H0z" fill="#e39a0b" />
          <path d="M0 3h10l1-2h11v16H0z" fill="#ffd768" />
          <path d="M4 18v-6q0-2 2-2h10q2 0 2 2v6h-4v-4H8v4z" fill="#3c96dc" />
        </svg>
      </TaskApp>
      <TaskApp $running aria-label="Google Chrome">
        <svg width="24" height="24" viewBox="0 0 24 24">
          <circle cx="12" cy="12" r="12" fill="#fbc116" />
          <path d="M12 12 1.600 6A12 12 0 0 1 22.400 6Z" fill="#e33b2e" />
          <path d="M12 6h10.400L17 6ZM1.600 6 6.800 15 12 18l-2 5.800A12 12 0 0 1 1.600 6Z" fill="#2da94f" />
          <path d="M12 6h10.400l-5.200 9L12 24h-2l5-9Z" fill="#fbc116" />
          <circle cx="12" cy="12" r="6" fill="#fff" />
          <circle cx="12" cy="12" r="4.700" fill="#3b7ded" />
        </svg>
      </TaskApp>
      <TaskApp $running $current aria-label="Power BI Desktop">
        <svg width="20" height="24" viewBox="0 0 20 24">
          <rect x="10" width="9" height="24" rx="1" fill="#d9930f" />
          <rect x="5" y="6" width="9" height="18" rx="1" fill="#f0c12c" />
          <rect x="0" y="12" width="8" height="12" rx="1" fill="#f9e06a" />
        </svg>
      </TaskApp>
    </TaskApps>
    <Tray>
      <TrayButton $width={64} aria-label="Notícias">
        <Stroke width="25" height="16" viewBox="0 0 25 16" strokeWidth="1.600">
          <path d="M1 1h20v14H1zM21 4h3v9q0 2-2 2h-3M4 4.500h14M13 7.500h5M13 10h5M13 12.500h5" />
          <rect x="4.500" y="7.500" width="6" height="5" />
        </Stroke>
      </TrayButton>
      <TrayButton aria-label="Ícones ocultos">
        <Chevron turn={180} />
      </TrayButton>
      <TrayButton aria-label="Câmera">
        <Stroke width="12" height="16" viewBox="0 0 12 16" strokeWidth="1.200">
          <rect x=".6" y="4.500" width="7" height="7" rx="1" />
          <path d="M8 7l3-1.500v5L8 9M2 1.500q4-2 7 0M2 14.500q4 2 7 0" />
        </Stroke>
      </TrayButton>
      <TrayButton aria-label="Rede">
        <Stroke width="14" height="14" viewBox="0 0 14 14">
          <path d="M1 13Q1 2 13 1M4 13Q4 5 13 4M7 13q0-5 6-6" />
          <circle cx="11.500" cy="11.500" r="1.500" fill="#fff" stroke="none" />
        </Stroke>
      </TrayButton>
      <TrayButton $width={22} aria-label="Volume">
        <Stroke width="17" height="14" viewBox="0 0 17 14">
          <path d="M.5 4.500h2.500l3.500-3.500v12L3 9.500H.5zM9 4.500q2 2.500 0 5M11.500 2.500q3.500 4.500 0 9M14 .5q5 6.500 0 13" />
        </Stroke>
      </TrayButton>
      <TrayButton $width={28} aria-label="Bateria">
        <Stroke width="17" height="12" viewBox="0 0 17 12">
          <path d="M1.500 0v3M4.500 0v3M.5 3.500h5q0 3-2.500 3v5" />
          <path d="M7 2.500h7.500v7H5M15.500 4.500v3" stroke="#999" />
          <path d="M7 4l4.500 4.500M11.500 4 7 8.500" strokeWidth="1.300" />
        </Stroke>
      </TrayButton>
      <TrayText $width={30}>POR<br />PTB2</TrayText>
      <TrayText $width={76}>12:21<br />20/08/2023</TrayText>
      <TrayButton $width={36} aria-label="Notificações">
        <Stroke width="17" height="17" viewBox="0 0 17 17" strokeWidth="1.200">
          <path d="M9 13.500 7 15.500v-3H.6V.6h15.800V9" />
          <path d="M14.500 9.500q2.500 5-5 5 3 3 6 0 2-3-1-5Z" fill="#fff" stroke="none" />
        </Stroke>
      </TrayButton>
      <ShowDesktop aria-label="Mostrar área de trabalho" />
    </Tray>
  </Taskbar>
);

const DialogSection = () => (
  <Overlay>
    <Dialog role="dialog" aria-labelledby="dialog-title">
      <DialogHead>
        <DialogTitle id="dialog-title">Texto alternativo - Texto alternativo</DialogTitle>
        <IconButton aria-label="Fechar caixa">
          <Stroke width="13" height="13" viewBox="0 0 13 13"><path d="M.5 .5l12 12M12.500 .5l-12 12" /></Stroke>
        </IconButton>
      </DialogHead>
      <Form>
        <Label htmlFor="format-style">Estilo do formato</Label>
        <Dropdown>
          <Select id="format-style">
            <option>Valor do campo</option>
          </Select>
          <DropdownArrow><Chevron /></DropdownArrow>
        </Dropdown>
        <Label htmlFor="base-field">Em que campo devemos basear isso?</Label>
        <Dropdown>
          <FieldPicker id="base-field" type="button" aria-haspopup="tree" aria-expanded="true" />
          <DropdownArrow><Chevron turn={180} /></DropdownArrow>
          <Popup>
            <SearchField>
              <Magnifier />
              <SearchInput aria-label="Pesquisar campos" placeholder="Pesquisar" />
            </SearchField>
            <PopupTree>
              <TableRow>
                <Chevron />
                <IconSlot><MeasureTableIcon /></IconSlot>
                <FieldName $table>Medidas</FieldName>
              </TableRow>
              {popupFields.map((name) => (
                <PopupField key={name} $selected={name === "FuncionariosAtivos"}>
                  {name === "Column" ? <SigmaIcon /> : <CalcIcon />}
                  {name}
                </PopupField>
              ))}
              <ScrollThumb $width={8} $height={240} />
            </PopupTree>
          </Popup>
        </Dropdown>
      </Form>
      <DialogFoot>
        <LearnMore href="#">Saiba mais sobre a formatação condicional</LearnMore>
        <DialogButton $width={53} disabled>OK</DialogButton>
        <DialogButton $width={88}>Cancelar</DialogButton>
      </DialogFoot>
    </Dialog>
  </Overlay>
);

export default function App() {
  return (
    <>
      <Global />
      <Desktop>
        <TitleSection />
        <RibbonSection />
        <Workspace>
          <RailSection />
          <ReportSection />
          <VisualSection />
          <DataSection />
        </Workspace>
        <StatusBar>
          <span>Página 1 de 1</span>
          <Zoom>
            <ZoomButton aria-label="Diminuir">-</ZoomButton>
            <ZoomSlider aria-label="Zoom" defaultValue={33} />
            <ZoomButton aria-label="Aumentar">+</ZoomButton>
            <ZoomValue>71%</ZoomValue>
            <IconButton aria-label="Ajustar à página">
              <Stroke width="16" height="12" viewBox="0 0 16 12">
                <path d="M.5 .5h15v11H.5zM3.500 4.500v-2H6M10 2.500h2.500v2M12.500 7.500v2H10M6 9.500H3.500v-2" />
              </Stroke>
            </IconButton>
          </Zoom>
        </StatusBar>
        <TaskbarSection />
        <DialogSection />
      </Desktop>
    </>
  );
}
